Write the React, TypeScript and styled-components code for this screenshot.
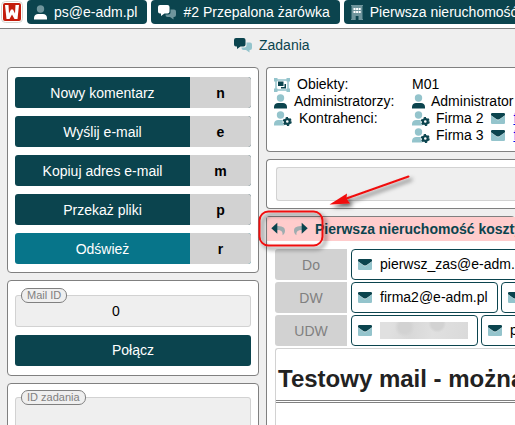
import React from "react";
import styled, { createGlobalStyle } from "styled-components";

const dark = "#0b444e";
const pale = "#94c4cc";
const line = "#808080";
const soft = "#d2d2d2";
const field = "#efefef";

const GlobalStyle = createGlobalStyle`
  * { box-sizing: border-box; }
  body {
    margin: 0;
    background: ${field};
    color: #000;
    font: 14px/17px "Liberation Sans", Arial, sans-serif;
  }
  button, input, textarea { font: inherit; }
`;

const Page = styled.div`
  display: flex;
  flex-direction: column;
  height: 100vh;
  overflow: hidden;
  white-space: nowrap;
`;

const TopBar = styled.nav`
  display: flex;
  flex: none;
  align-items: flex-start;
  gap: 4px;
  height: 29px;
  padding-left: 1px;
  background: #fff;
  border-bottom: 1px solid ${line};
`;

const Logo = styled.a`
  display: flex;
  flex: none;
`;

const Tab = styled.button`
  display: flex;
  flex: none;
  align-items: center;
  gap: 7px;
  height: 24px;
  padding: 0 10px 0 7px;
  border: 0;
  border-radius: 4px;
  background: ${dark};
  color: #fff;
`;

const Title = styled.header`
  display: flex;
  flex: none;
  align-items: center;
  gap: 7px;
  height: 38px;
  padding: 0 0 6px 234px;
  color: ${dark};
`;

const Heading = styled.h1`
  margin: 0;
  font-size: 14px;
  font-weight: normal;
`;

const Main = styled.main`
  display: grid;
  flex: 1;
  grid-template-columns: 252px minmax(0, 1fr);
  gap: 7px;
  min-height: 0;
  padding-left: 7px;
`;

const Column = styled.div`
  display: flex;
  flex-direction: column;
  gap: 7px;
  min-width: 0;
`;

const Card = styled.section<{ $pad?: string; $open?: boolean }>`
  flex: ${(p) => (p.$open ? "1 0 auto" : "none")};
  padding: ${(p) => p.$pad ?? "9px 7px 8px"};
  background: #fff;
  border: 1px solid ${line};
  border-width: ${(p) => (p.$open ? "1px 0 0 1px" : "1px")};
  border-radius: 4px;
`;

const WideCard = styled(Card)`
  border-right: 0;
  border-radius: 4px 0 0 4px;
`;

const Actions = styled.div`
  display: grid;
  gap: 8px;
`;

const Action = styled.button<{ $bright?: boolean }>`
  display: grid;
  grid-template-columns: 1fr 61px;
  height: 31px;
  padding: 0;
  border: 0;
  border-radius: 3px;
  overflow: hidden;
  line-height: 32px;
  color: #fff;
  background: ${(p) => (p.$bright ? "#07758a" : dark)};
`;

const Key = styled.kbd`
  background: ${soft};
  color: #000;
  font-family: inherit;
  font-weight: bold;
`;

const Field = styled.fieldset`
  min-width: 0;
  margin: 0;
  padding: 0;
  border: 1px solid ${soft};
  border-radius: 3px;
  background: ${field};
`;

const Legend = styled.legend`
  margin-left: 5px;
  padding: 0 5px;
  border: 1px solid ${line};
  border-radius: 7px;
  background: ${field};
  color: ${line};
  font-size: 11px;
  line-height: 13px;
`;

const NumberInput = styled.input`
  display: block;
  width: 100%;
  height: 23px;
  padding: 0 34px 7px 0;
  border: 0;
  background: transparent;
  text-align: center;
`;

const TaskInput = styled(NumberInput)`
  height: 40px;
`;

const Connect = styled.button`
  display: block;
  width: 100%;
  height: 31px;
  margin-top: 8px;
  padding: 0;
  border: 0;
  border-radius: 3px;
  background: ${dark};
  color: #fff;
`;

const Facts = styled.dl`
  display: grid;
  grid-template-columns: 138px 1fr;
  margin: 0;
`;

const Term = styled.dt`
  display: flex;
  align-items: center;
  gap: 7px;
`;

const Value = styled.dd`
  display: flex;
  align-items: center;
  gap: 8px;
  margin: 0;
`;

const Name = styled.span`
  display: flex;
  align-items: center;
  gap: 6px;
`;

const Contact = styled.a`
  color: #0000ee;
`;

const Reply = styled.input`
  display: block;
  width: 100%;
  height: 34px;
  border: 1px solid ${soft};
  border-right: 0;
  border-radius: 3px 0 0 3px;
  background: ${field};
`;

const MailHeader = styled.header`
  position: relative;
  display: flex;
  align-items: center;
  gap: 7px;
  height: 24px;
  padding-left: 4px;
  background: #ffcccc;
  color: ${dark};
`;

const MailTitle = styled.h2`
  margin: 0;
  font-size: 14px;
  font-weight: bold;
`;

const IconButton = styled.button`
  display: flex;
  padding: 0;
  border: 0;
  background: transparent;
`;

const Annotation = styled.svg`
  position: absolute;
  left: -17px;
  top: -47px;
  overflow: visible;
  pointer-events: none;
`;

const Mail = styled.div`
  display: grid;
  gap: 2px;
  padding: 8px 0 0 8px;
`;

const Recipients = styled.div`
  display: flex;
  gap: 3px;
  height: 31px;
`;

const Kind = styled.span`
  flex: none;
  width: 72px;
  margin-right: 1px;
  border-radius: 3px 0 0 3px;
  background: ${soft};
  color: ${line};
  line-height: 32px;
  text-align: center;
`;

const Chip = styled.button`
  display: flex;
  flex: none;
  align-items: center;
  gap: 8px;
  padding: 0 9px 0 6px;
  border: 1px solid ${dark};
  border-radius: 4px;
  background: #fff;
  color: #000;
`;

const Redacted = styled.span`
  width: 88px;
  height: 17px;
  background:
    radial-gradient(circle at 28% 30%, #d2d2d2 0 6px, transparent 10px),
    radial-gradient(circle at 65% 10%, #d2d2d2 0 6px, transparent 9px),
    linear-gradient(100deg, #e0e0e0 0 12%, #d8d8d8 35%, #e0e0e0 60%, #dadada);
`;

const MailBody = styled.article`
  min-height: 120px;
  border: 1px solid ${soft};
  border-width: 1px 0 0 1px;
  border-radius: 3px 0 0 0;
`;

const Subject = styled.h3`
  margin: 0;
  padding: 17px 0 8px 2px;
  border-bottom: 3px double ${line};
  color: #222;
  font-size: 24px;
  line-height: 26px;
`;

type Tone = { front?: string; back?: string };

const LogoMark = () => (
  <svg width="22" height="24" viewBox="0 0 22 24">
    <rect x="0.5" y="1.5" width="21" height="21" rx="4" fill="#fff" stroke="#d5d5cf" />
    <rect x="2" y="3" width="18" height="18" rx="2" fill="#c41d0c" />
    <path d="M4 5h3.500l.5 8.500 2-4h2l2 4L14.500 5H18l-1.500 14h-3L11 14.500 8.500 19h-3z" fill="#fff" />
  </svg>
);

const Person = ({ front = dark, back = pale }: Tone) => (
  <svg width="13" height="15" viewBox="0 0 13 15">
    <circle cx="6.500" cy="4" r="3.700" fill={back} />
    <path d="M0 14.500v-1.500C0 10.500 2 9 4 9h5c2 0 4 1.500 4 4v1.500z" fill={front} />
  </svg>
);

const PersonGear = () => (
  <svg width="18" height="15" viewBox="0 0 18 15">
    <circle cx="6.500" cy="4" r="3.700" fill={pale} />
    <path d="M0 14.500V13c0-2.500 2-4 4-4h5l1 5.500z" fill={pale} />
    <circle cx="13.300" cy="10.500" r="4.700" fill="#fff" />
    <circle cx="13.300" cy="10.500" r="2.400" fill="none" stroke={dark} strokeWidth="2.200" />
    <circle cx="13.300" cy="10.500" r="3.700" fill="none" stroke={dark} strokeWidth="1.600" strokeDasharray="2.200 1.670" />
  </svg>
);

const Chat = ({ front = dark, back = pale }: Tone) => (
  <svg width="18" height="15" viewBox="0 0 18 15">
    <path d="M12.500 4.500H16a2 2 0 0 1 2 2V10a2 2 0 0 1-2 2h-.5v2.500L12 12H9.500a2 2 0 0 1-2-2V9.500h3a2 2 0 0 0 2-2z" fill={back} />
    <path d="M2 0h7.500a2 2 0 0 1 2 2v4.500a2 2 0 0 1-2 2H6.500L3 11V8.500H2a2 2 0 0 1-2-2V2a2 2 0 0 1 2-2z" fill={front} />
  </svg>
);

const Building = () => (
  <svg width="12" height="15" viewBox="0 0 12 15">
    <path d="M0 0h12v1h-.5v13h.5v1H0v-1h.5V1H0z" fill="#6f959c" />
    <path d="M2.500 3h2v2h-2zm2.600 0h2v2h-2zm2.600 0h2v2h-2zM2.500 6h2v2h-2zm2.600 0h2v2h-2zm2.600 0h2v2h-2z" fill="#fff" />
    <path d="M4.700 11h2.800v4H4.700z" fill={dark} />
  </svg>
);

const ObjectGroup = () => (
  <svg width="16" height="14" viewBox="0 0 16 14">
    <path d="M2 2h12v10H2z" fill="none" stroke={pale} strokeWidth="1.500" />
    <path d="M0 0h3.500v3.500H0zm12.500 0H16v3.500h-3.500zM0 10.500h3.500V14H0zm12.500 0H16V14h-3.500z" fill={pale} />
    <path d="M4 3.500h5.500v4.500H4zM10.500 6H12v4.500H7V9h3.500z" fill={dark} />
  </svg>
);

const Envelope = () => (
  <svg width="14" height="11" viewBox="0 0 14 11">
    <path d="M0 2.500l7 5 7-5V9.500A1.300 1.300 0 0 1 12.700 11H1.300A1.300 1.300 0 0 1 0 9.500z" fill={pale} />
    <path d="M1.200 0h11.600A1.200 1.200 0 0 1 14 1.200v1L8.300 6.200Q7 7 5.700 6.200L0 2.200v-1A1.200 1.200 0 0 1 1.200 0z" fill={dark} />
  </svg>
);

const ReplyIcon = ({ forward }: { forward?: boolean }) => (
  <svg width="15" height="14" viewBox="0 0 15 14">
    <g transform={forward ? "matrix(-1 0 0 1 15 0)" : undefined}>
      <path d="M5.500 4c5 0 8.500.8 8.500 4.700 0 2-1 3.700-2.500 4.600.5-3.500-1-5.300-6-5.300z" fill="#9fadb0" />
      <path d="M6.300.8v11L.3 6.300z" fill={dark} />
    </g>
  </svg>
);

const actions = [
  ["Nowy komentarz", "n"],
  ["Wyślij e-mail", "e"],
  ["Kopiuj adres e-mail", "m"],
  ["Przekaż pliki", "p"],
  ["Odśwież", "r"],
];

const Highlight = () => (
  <Annotation width="180" height="90" viewBox="0 0 180 90" aria-hidden="true">
    <defs>
      <filter id="shade" x="-20%" y="-20%" width="150%" height="150%">
        <feDropShadow dx="3" dy="3" stdDeviation="2" floodColor="#000" floodOpacity="0.6" />
      </filter>
    </defs>
    <g filter="url(#shade)">
      <rect x="9.500" y="41.500" width="63" height="34" rx="9" fill="none" stroke="#f01010" strokeWidth="2" />
      <path d="M158.500 6.500L95 29" stroke="#f01010" strokeWidth="2" strokeLinecap="round" />
      <path d="M79.500 34.500L97 23.500l-.5 5 3.500 5z" fill="#f01010" />
    </g>
  </Annotation>
);

export default function App() {
  return (
    <Page>
      <GlobalStyle />
      <TopBar>
        <Logo href="#" aria-label="Start"><LogoMark /></Logo>
        <Tab><Person front="#fff" back="#6f959c" />ps@e-adm.pl</Tab>
        <Tab><Chat front="#fff" back="#6f959c" />#2 Przepalona żarówka</Tab>
        <Tab><Building />Pierwsza nieruchomość</Tab>
      </TopBar>
      <Title><Chat /><Heading>Zadania</Heading></Title>
      <Main>
        <Column>
          <Card>
            <Actions>
              {actions.map(([label, key]) => (
                <Action key={key} $bright={key === "r"}>
                  <span>{label}</span>
                  <Key>{key}</Key>
                </Action>
              ))}
            </Actions>
          </Card>
          <Card $pad="7px 7px 9px">
            <Field>
              <Legend>Mail ID</Legend>
              <NumberInput aria-label="Mail ID" defaultValue="0" />
            </Field>
            <Connect>Połącz</Connect>
          </Card>
          <Card $pad="6px 7px">
            <Field>
              <Legend>ID zadania</Legend>
              <TaskInput aria-label="ID zadania" />
            </Field>
          </Card>
        </Column>
        <Column>
          <WideCard $pad="8px 7px 7px">
            <Facts>
              <Term><ObjectGroup />Obiekty:</Term>
              <Value>M01</Value>
              <Term><Person />Administratorzy:</Term>
              <Value><Name><Person />Administrator</Name></Value>
              <Term><PersonGear />Kontrahenci:</Term>
              <Value><Name><PersonGear />Firma 2</Name><Envelope /><Contact href="#">firma2@e-adm.pl</Contact></Value>
              <Term />
              <Value><Name><PersonGear />Firma 3</Name><Envelope /><Contact href="#">firma3@e-adm.pl</Contact></Value>
            </Facts>
          </WideCard>
          <WideCard $pad="7px 0 7px 9px">
            <Reply aria-label="Komentarz" />
          </WideCard>
          <Card $pad="0" $open>
            <MailHeader>
              <IconButton aria-label="Odpowiedz"><ReplyIcon /></IconButton>
              <IconButton aria-label="Przekaż"><ReplyIcon forward /></IconButton>
              <MailTitle>Pierwsza nieruchomość koszty</MailTitle>
              <Highlight />
            </MailHeader>
            <Mail>
              <Recipients>
                <Kind>Do</Kind>
                <Chip><Envelope />pierwsz_zas@e-adm.pl</Chip>
              </Recipients>
              <Recipients>
                <Kind>DW</Kind>
                <Chip><Envelope />firma2@e-adm.pl</Chip>
                <Chip><Envelope />firma3@e-adm.pl</Chip>
              </Recipients>
              <Recipients>
                <Kind>UDW</Kind>
                <Chip aria-label="Adres ukryty"><Envelope /><Redacted /></Chip>
                <Chip><Envelope />ps@e-adm.pl</Chip>
              </Recipients>
              <MailBody>
                <Subject>Testowy mail - można</Subject>
              </MailBody>
            </Mail>
          </Card>
        </Column>
      </Main>
    </Page>
  );
}
